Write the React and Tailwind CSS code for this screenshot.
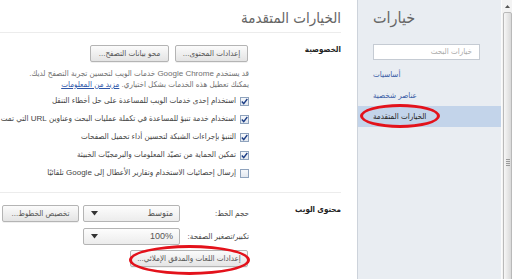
import React from "react";

const FONT = { fontFamily: '"Liberation Sans", "DejaVu Sans Condensed", "DejaVu Sans", sans-serif', fontStretch: "condensed" };

function Btn({ w, children }) {
  return (
    <div
      className={`h-[17px] ${w} shrink-0 flex items-center justify-center rounded-[2px] border border-[#b4b4b4] bg-gradient-to-b from-[#fbfbfb] to-[#e4e4e4] text-[8px] leading-none text-[#555] whitespace-nowrap shadow-[0_1px_0_rgba(0,0,0,0.06)]`}
    >
      {children}
    </div>
  );
}

function Select({ children }) {
  return (
    <div className="h-[17px] w-[97px] shrink-0 flex items-center justify-between rounded-[2px] border border-[#b4b4b4] bg-gradient-to-b from-[#fdfdfd] to-[#ececec] pr-[6px] pl-[7px] text-[9px] leading-none text-[#555]">
      <span>{children}</span>
      <svg width="7" height="5" viewBox="0 0 7 5">
        <path d="M0 0H7L3.5 4.5Z" fill="#333" />
      </svg>
    </div>
  );
}

function Check({ checked, children }) {
  return (
    <div className="h-[18px] flex items-center gap-[4px] whitespace-nowrap">
      <div className="w-[9px] h-[9px] shrink-0 border border-[#8fa3bd] bg-gradient-to-b from-[#f6f8fb] to-[#e3e8ef] flex items-center justify-center">
        {checked && (
          <svg width="7" height="7" viewBox="0 0 7 7">
            <path d="M0.8 3.6L2.7 5.6L6.3 1" stroke="#1d3e86" strokeWidth="1.4" fill="none" />
          </svg>
        )}
      </div>
      <span className="text-[8px] leading-none text-[#444]">{children}</span>
    </div>
  );
}

export default function App() {
  return (
    <div className="w-[512px] h-[279px] flex overflow-hidden bg-white relative" style={FONT}>
      {/* Main */}
      <div className="w-[357px] h-[279px] shrink-0 overflow-hidden" dir="rtl">
        <div className="mr-[16px]">
          <div className="h-[33px] border-b border-[#ececec] pt-[8px]">
            <div className="text-[15px] leading-[20px] text-[#666]">الخيارات المتقدمة</div>
          </div>

          {/* Privacy */}
          <div className="grid grid-cols-[92px_1fr] border-b border-[#ececec] h-[160px]">
            <div className="pt-[11px] text-[8px] leading-[12px] font-bold text-[#222]">الخصوصية</div>
            <div className="pt-[12px]">
              <div className="flex gap-[6px] pr-[1px]">
                <Btn w="w-[73px]">إعدادات المحتوى...</Btn>
                <Btn w="w-[79px]">محو بيانات التصفح...</Btn>
              </div>
              <div className="mt-[6px] text-[8px] leading-[11px] text-[#707070] whitespace-nowrap">
                <div>قد يستخدم Google Chrome خدمات الويب لتحسين تجربة التصفح لديك.</div>
                <div>
                  يمكنك تعطيل هذه الخدمات بشكل اختياري.{" "}
                  <span className="text-[#2f56a8] underline">مزيد من المعلومات</span>
                </div>
              </div>
              <div className="mt-[2px]">
                <Check checked>استخدام إحدى خدمات الويب للمساعدة على حل أخطاء التنقل</Check>
                <Check checked>استخدام خدمة تنبؤ للمساعدة في تكملة عمليات البحث وعناوين URL التي تمت كتابتها</Check>
                <Check checked>التنبؤ بإجراءات الشبكة لتحسين أداء تحميل الصفحات</Check>
                <Check checked>تمكين الحماية من تصيّد المعلومات والبرمجيّات الخبيثة</Check>
                <Check>إرسال إحصائيات الاستخدام وتقارير الأعطال إلى Google تلقائيًا</Check>
              </div>
            </div>
          </div>

          {/* Web content */}
          <div className="grid grid-cols-[92px_1fr]">
            <div className="pt-[11px] text-[8px] leading-[12px] font-bold text-[#222]">محتوى الويب</div>
            <div className="pt-[12px] flex flex-col gap-[6px]">
              <div className="flex items-center">
                <div className="w-[69px] shrink-0 text-[8px] leading-none text-[#444] whitespace-nowrap">حجم الخط:</div>
                <Select>متوسط</Select>
                <div className="w-[4px] shrink-0" />
                <Btn w="w-[77px]">تخصيص الخطوط...</Btn>
              </div>
              <div className="flex items-center">
                <div className="w-[69px] shrink-0 text-[8px] leading-none text-[#444] whitespace-nowrap">تكبير/تصغير الصفحة:</div>
                <Select>100%</Select>
              </div>
              <div className="flex -mt-[1px] pr-[1px]">
                <Btn w="w-[118px]">إعدادات اللغات والمدقق الإملائي...</Btn>
              </div>
            </div>
          </div>
        </div>
      </div>

      {/* Sidebar */}
      <div className="w-[144px] h-[279px] shrink-0 bg-[#e9edf2] border-l border-[#cdd3db]">
        <div className="pl-[15px] pt-[8px]">
          <div className="text-[16px] leading-[20px] text-[#666]" dir="rtl" style={{ textAlign: "left" }}>
            <span>خيارات</span>
          </div>
          <div className="mt-[16px] w-[107px] h-[16px] bg-white border border-[#c5cbd3] flex items-center pr-[7px] text-[8px] leading-none text-[#aaa]" dir="rtl">
            <span>خيارات البحث</span>
          </div>
        </div>
        <div className="mt-[4px]">
          <div className="h-[21px] flex items-center pl-[15px] text-[8px] text-[#3b5ea6]">أساسيات</div>
          <div className="h-[21px] flex items-center pl-[15px] text-[8px] text-[#3b5ea6]">عناصر شخصية</div>
          <div className="h-[21px] flex items-center pl-[15px] text-[8px] text-[#222] bg-[#c3d4ea]">الخيارات المتقدمة</div>
        </div>
      </div>

      {/* Scrollbar */}
      <div className="w-[11px] h-[279px] shrink-0 bg-[#f3f3f3] flex flex-col overflow-hidden border-l border-[#fbfbfb]">
        <div className="h-[12px] shrink-0 flex items-center justify-center">
          <svg width="5" height="3" viewBox="0 0 5 3">
            <path d="M0 3L2.5 0L5 3Z" fill="#555" />
          </svg>
        </div>
        <div className="h-[300px] shrink-0 ml-[1px] border border-[#b9b9b9] rounded-[2px] bg-gradient-to-r from-[#f7f7f7] to-[#d9d9d9] flex flex-col items-center justify-center gap-[1px]">
          <div className="w-[4px] h-[1px] bg-[#9a9a9a]" />
          <div className="w-[4px] h-[1px] bg-[#9a9a9a]" />
          <div className="w-[4px] h-[1px] bg-[#9a9a9a]" />
          <div className="w-[4px] h-[1px] bg-[#9a9a9a]" />
        </div>
      </div>

      {/* Red annotation ellipses */}
      <div className="absolute left-[360px] top-[104px] w-[80px] h-[24px] rounded-[50%] border-[3px] border-[#e3121b] pointer-events-none" />
      <div className="absolute left-[129px] top-[245px] w-[121px] h-[30px] rounded-[50%] border-[3px] border-[#e3121b] pointer-events-none" />
    </div>
  );
}
